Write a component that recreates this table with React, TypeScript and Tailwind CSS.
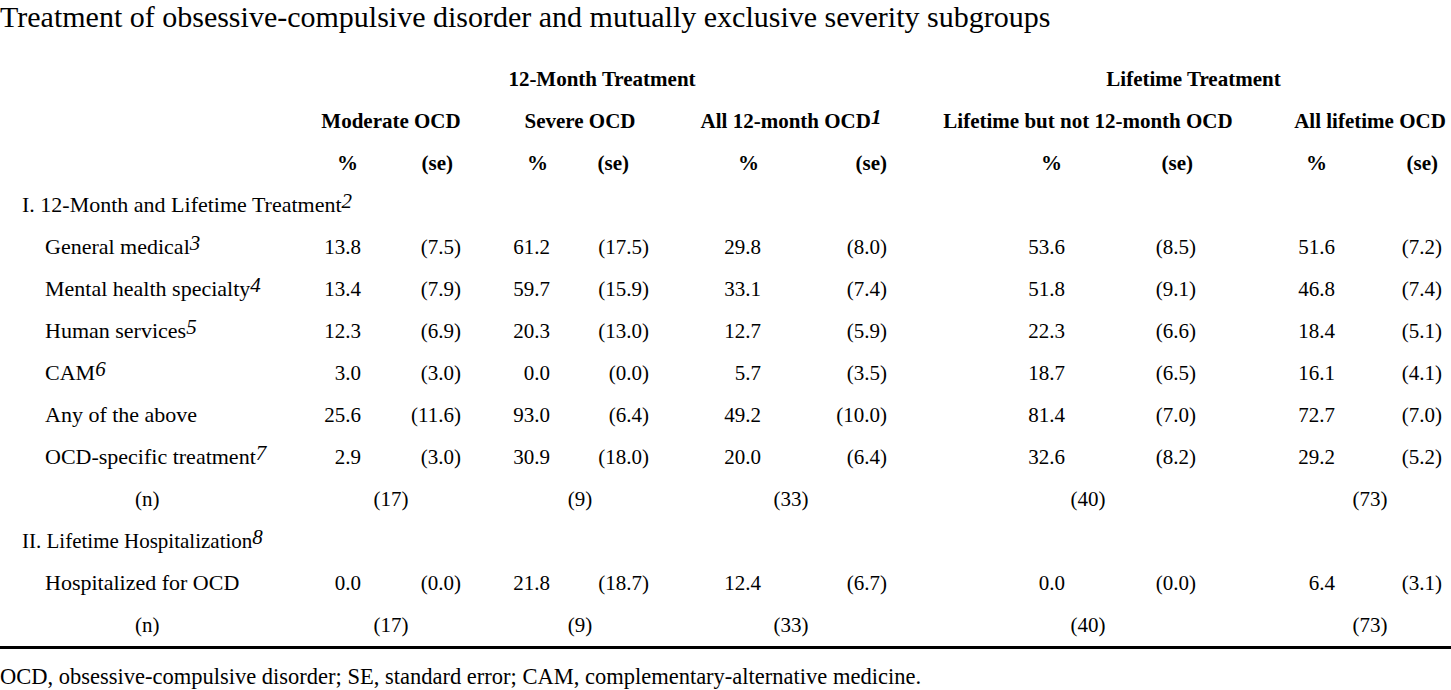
import React from 'react';

const dataCols =
  'grid grid-cols-[300px_61px_100px_89px_99px_112px_126px_178px_131px_139px_107px] h-[42px] items-center';
const groupCols =
  'grid grid-cols-[300px_182px_196px_226px_368px_18px_160px] h-[42px] items-center';

const rows = [
  { label: 'General medical', sup: '3', v: ['13.8', '(7.5)', '61.2', '(17.5)', '29.8', '(8.0)', '53.6', '(8.5)', '51.6', '(7.2)'] },
  { label: 'Mental health specialty', sup: '4', v: ['13.4', '(7.9)', '59.7', '(15.9)', '33.1', '(7.4)', '51.8', '(9.1)', '46.8', '(7.4)'] },
  { label: 'Human services', sup: '5', v: ['12.3', '(6.9)', '20.3', '(13.0)', '12.7', '(5.9)', '22.3', '(6.6)', '18.4', '(5.1)'] },
  { label: 'CAM', sup: '6', v: ['3.0', '(3.0)', '0.0', '(0.0)', '5.7', '(3.5)', '18.7', '(6.5)', '16.1', '(4.1)'] },
  { label: 'Any of the above', sup: '', v: ['25.6', '(11.6)', '93.0', '(6.4)', '49.2', '(10.0)', '81.4', '(7.0)', '72.7', '(7.0)'] },
  { label: 'OCD-specific treatment', sup: '7', v: ['2.9', '(3.0)', '30.9', '(18.0)', '20.0', '(6.4)', '32.6', '(8.2)', '29.2', '(5.2)'] },
];

const hosp = ['0.0', '(0.0)', '21.8', '(18.7)', '12.4', '(6.7)', '0.0', '(0.0)', '6.4', '(3.1)'];
const counts = ['(17)', '(9)', '(33)', '(40)', '(73)'];

function Sup({ n, bold }: { n: string; bold?: boolean }) {
  return (
    <sup className={`italic text-[21px] relative -top-[4px] ${bold ? 'font-bold' : 'font-normal'}`}>{n}</sup>
  );
}

function CountRow() {
  return (
    <div className={groupCols}>
      <div className="pl-[135px]">(n)</div>
      <div className="text-center">{counts[0]}</div>
      <div className="text-center">{counts[1]}</div>
      <div className="text-center">{counts[2]}</div>
      <div className="text-center">{counts[3]}</div>
      <div />
      <div className="text-center">{counts[4]}</div>
    </div>
  );
}

function DataRow({ label, sup, v }: { label: string; sup?: string; v: string[] }) {
  return (
    <div className={dataCols}>
      <div className="pl-[45px] whitespace-nowrap text-[22px]">
        {label}
        {sup ? <Sup n={sup} /> : null}
      </div>
      {v.map((x, i) => (
        <div key={i} className="text-right">
          {x}
        </div>
      ))}
    </div>
  );
}

export default function App() {
  const pctPad = ['pr-[3px]', 'pr-[8px]', 'pr-[2px]', 'pr-[20px]', 'pr-[2px]', 'pr-0', 'pr-[3px]', 'pr-[3px]', 'pr-[8px]', 'pr-[4px]'];
  return (
    <div className="w-[1451px] h-[690px] bg-white text-black font-['Liberation_Serif',serif] text-[21px] leading-none overflow-hidden">
      <div className="pt-[2px] text-[30px] leading-[30px] whitespace-nowrap">
        Treatment of obsessive-compulsive disorder and mutually exclusive severity subgroups
      </div>

      <div className="mt-[26px] font-bold">
        <div className="grid grid-cols-[300px_604px_1fr] h-[42px] items-center">
          <div />
          <div className="text-center">12-Month Treatment</div>
          <div className="pl-[32px] text-center">Lifetime Treatment</div>
        </div>
        <div className={groupCols}>
          <div />
          <div className="text-center whitespace-nowrap">Moderate OCD</div>
          <div className="text-center whitespace-nowrap">Severe OCD</div>
          <div className="text-center whitespace-nowrap">
            All 12-month OCD
            <Sup n="1" bold />
          </div>
          <div className="text-center whitespace-nowrap">Lifetime but not 12-month OCD</div>
          <div />
          <div className="text-center whitespace-nowrap">All lifetime OCD</div>
        </div>
        <div className={dataCols}>
          <div />
          {pctPad.map((p, i) => (
            <div key={i} className={`text-right ${p}`}>
              {i % 2 === 0 ? '%' : '(se)'}
            </div>
          ))}
        </div>
      </div>

      <div className="h-[42px] flex items-center pl-[22px] text-[22px]">
        I. 12-Month and Lifetime Treatment
        <Sup n="2" />
      </div>
      {rows.map((r) => (
        <DataRow key={r.label} label={r.label} sup={r.sup} v={r.v} />
      ))}
      <CountRow />

      <div className="h-[42px] flex items-center pl-[22px]">
        II. Lifetime Hospitalization
        <Sup n="8" />
      </div>
      <DataRow label="Hospitalized for OCD" v={hosp} />
      <CountRow />

      <div className="border-t-[3px] border-black" />
      <div className="pt-[16px] text-[22.5px] leading-[24px] whitespace-nowrap">
        OCD, obsessive-compulsive disorder; SE, standard error; CAM, complementary-alternative medicine.
      </div>
    </div>
  );
}
